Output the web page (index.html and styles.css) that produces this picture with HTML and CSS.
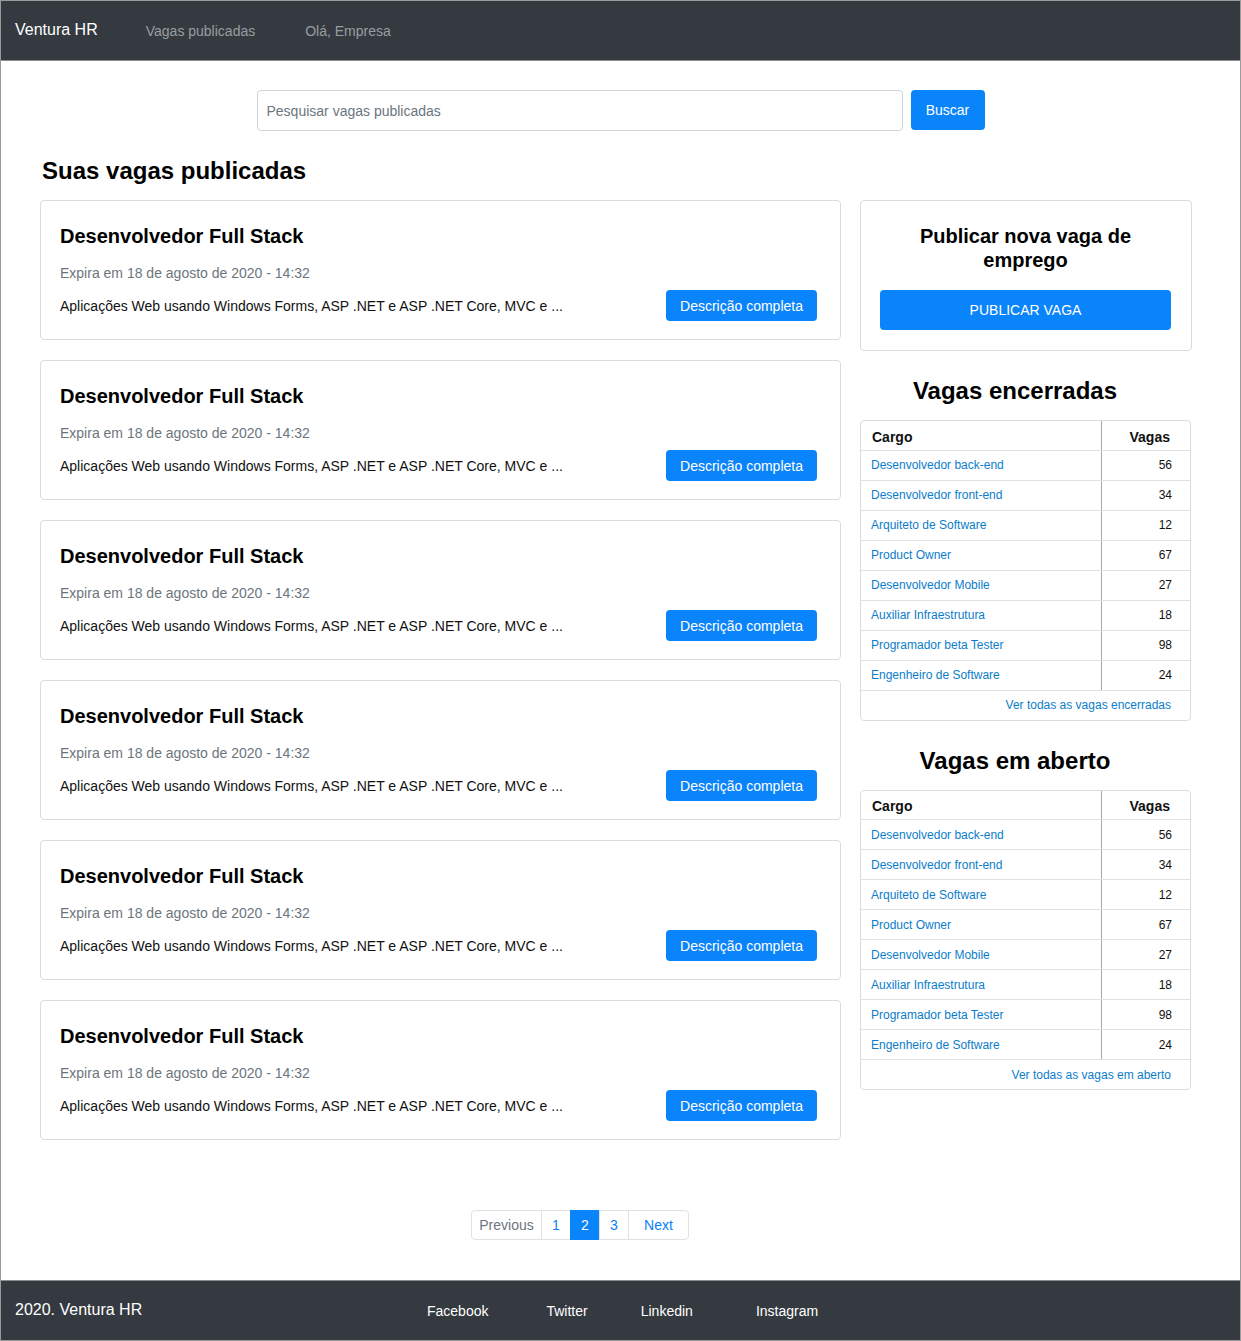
FILE: index.html
```html
<!DOCTYPE html>
<html lang="pt-BR">
<head>
<meta charset="utf-8">
<title>Ventura HR</title>
<link rel="stylesheet" href="styles.css">
</head>
<body>
<div class="page">
  <nav class="navbar">
    <span class="brand">Ventura HR</span>
    <a class="nav-link" href="#">Vagas publicadas</a>
    <a class="nav-link" href="#">Olá, Empresa</a>
  </nav>

  <main class="main">
    <form class="search">
      <input class="search-input" type="text" placeholder="Pesquisar vagas publicadas">
      <button class="btn btn-search" type="button">Buscar</button>
    </form>

    <h2 class="page-title">Suas vagas publicadas</h2>

    <div class="content">
      <section class="jobs">
        <article class="card job">
          <h3 class="job-title">Desenvolvedor Full Stack</h3>
          <p class="job-date">Expira em 18 de agosto de 2020 - 14:32</p>
          <div class="job-row">
            <p class="job-desc">Aplicações Web usando Windows Forms, ASP .NET e ASP .NET Core, MVC e ...</p>
            <a class="btn btn-desc" href="#">Descrição completa</a>
          </div>
        </article>
        <article class="card job">
          <h3 class="job-title">Desenvolvedor Full Stack</h3>
          <p class="job-date">Expira em 18 de agosto de 2020 - 14:32</p>
          <div class="job-row">
            <p class="job-desc">Aplicações Web usando Windows Forms, ASP .NET e ASP .NET Core, MVC e ...</p>
            <a class="btn btn-desc" href="#">Descrição completa</a>
          </div>
        </article>
        <article class="card job">
          <h3 class="job-title">Desenvolvedor Full Stack</h3>
          <p class="job-date">Expira em 18 de agosto de 2020 - 14:32</p>
          <div class="job-row">
            <p class="job-desc">Aplicações Web usando Windows Forms, ASP .NET e ASP .NET Core, MVC e ...</p>
            <a class="btn btn-desc" href="#">Descrição completa</a>
          </div>
        </article>
        <article class="card job">
          <h3 class="job-title">Desenvolvedor Full Stack</h3>
          <p class="job-date">Expira em 18 de agosto de 2020 - 14:32</p>
          <div class="job-row">
            <p class="job-desc">Aplicações Web usando Windows Forms, ASP .NET e ASP .NET Core, MVC e ...</p>
            <a class="btn btn-desc" href="#">Descrição completa</a>
          </div>
        </article>
        <article class="card job">
          <h3 class="job-title">Desenvolvedor Full Stack</h3>
          <p class="job-date">Expira em 18 de agosto de 2020 - 14:32</p>
          <div class="job-row">
            <p class="job-desc">Aplicações Web usando Windows Forms, ASP .NET e ASP .NET Core, MVC e ...</p>
            <a class="btn btn-desc" href="#">Descrição completa</a>
          </div>
        </article>
        <article class="card job">
          <h3 class="job-title">Desenvolvedor Full Stack</h3>
          <p class="job-date">Expira em 18 de agosto de 2020 - 14:32</p>
          <div class="job-row">
            <p class="job-desc">Aplicações Web usando Windows Forms, ASP .NET e ASP .NET Core, MVC e ...</p>
            <a class="btn btn-desc" href="#">Descrição completa</a>
          </div>
        </article>
      </section>

      <aside class="side">
        <div class="card publish">
          <h3 class="publish-title">Publicar nova vaga de emprego</h3>
          <a class="btn btn-publish" href="#">PUBLICAR VAGA</a>
        </div>

        <h2 class="side-title">Vagas encerradas</h2>
        <div class="card table-card">
          <table class="vagas">
            <thead><tr><th class="c-cargo">Cargo</th><th class="c-num">Vagas</th></tr></thead>
            <tbody>
              <tr><td class="c-cargo"><a href="#">Desenvolvedor back-end</a></td><td class="c-num">56</td></tr>
              <tr><td class="c-cargo"><a href="#">Desenvolvedor front-end</a></td><td class="c-num">34</td></tr>
              <tr><td class="c-cargo"><a href="#">Arquiteto de Software</a></td><td class="c-num">12</td></tr>
              <tr><td class="c-cargo"><a href="#">Product Owner</a></td><td class="c-num">67</td></tr>
              <tr><td class="c-cargo"><a href="#">Desenvolvedor Mobile</a></td><td class="c-num">27</td></tr>
              <tr><td class="c-cargo"><a href="#">Auxiliar Infraestrutura</a></td><td class="c-num">18</td></tr>
              <tr><td class="c-cargo"><a href="#">Programador beta Tester</a></td><td class="c-num">98</td></tr>
              <tr><td class="c-cargo"><a href="#">Engenheiro de Software</a></td><td class="c-num">24</td></tr>
            </tbody>
          </table>
          <div class="table-foot"><a href="#">Ver todas as vagas encerradas</a></div>
        </div>

        <h2 class="side-title">Vagas em aberto</h2>
        <div class="card table-card">
          <table class="vagas">
            <thead><tr><th class="c-cargo">Cargo</th><th class="c-num">Vagas</th></tr></thead>
            <tbody>
              <tr><td class="c-cargo"><a href="#">Desenvolvedor back-end</a></td><td class="c-num">56</td></tr>
              <tr><td class="c-cargo"><a href="#">Desenvolvedor front-end</a></td><td class="c-num">34</td></tr>
              <tr><td class="c-cargo"><a href="#">Arquiteto de Software</a></td><td class="c-num">12</td></tr>
              <tr><td class="c-cargo"><a href="#">Product Owner</a></td><td class="c-num">67</td></tr>
              <tr><td class="c-cargo"><a href="#">Desenvolvedor Mobile</a></td><td class="c-num">27</td></tr>
              <tr><td class="c-cargo"><a href="#">Auxiliar Infraestrutura</a></td><td class="c-num">18</td></tr>
              <tr><td class="c-cargo"><a href="#">Programador beta Tester</a></td><td class="c-num">98</td></tr>
              <tr><td class="c-cargo"><a href="#">Engenheiro de Software</a></td><td class="c-num">24</td></tr>
            </tbody>
          </table>
          <div class="table-foot"><a href="#">Ver todas as vagas em aberto</a></div>
        </div>
      </aside>
    </div>

    <nav class="pagination">
      <a class="page-item muted" href="#">Previous</a>
      <a class="page-item" href="#">1</a>
      <a class="page-item active" href="#">2</a>
      <a class="page-item" href="#">3</a>
      <a class="page-item next" href="#">Next</a>
    </nav>
  </main>

  <footer class="footer">
    <span class="footer-brand">2020. Ventura HR</span>
    <div class="footer-links">
      <a href="#">Facebook</a>
      <a href="#">Twitter</a>
      <a href="#">Linkedin</a>
      <a href="#">Instagram</a>
    </div>
  </footer>
</div>
</body>
</html>
```

FILE: styles.css
```css
* { box-sizing: border-box; }

html, body {
  margin: 0;
  padding: 0;
  background: #fff;
}

body {
  font-family: "Liberation Sans", Arial, sans-serif;
  color: #111;
  font-size: 14px;
}

a { text-decoration: none; }

.page {
  border: 1px solid #9b9b9b;
  min-height: 1341px;
  display: flex;
  flex-direction: column;
}

/* navbar */
.navbar {
  height: 60px;
  background: #343a40;
  border-bottom: 1px solid #8c8c8c;
  display: flex;
  align-items: center;
  padding-left: 14px;
}

.brand {
  color: #fff;
  font-size: 16px;
  margin-top: -2px;
  margin-right: 48px;
}

.nav-link {
  color: #9a9da1;
  font-size: 14px;
  margin-right: 50px;
}

/* main */
.main {
  flex: 1;
  padding: 29px 48px 0 39px;
}

.search {
  display: flex;
  justify-content: center;
  gap: 8px;
  padding-left: 9px;
}

.search-input {
  width: 646px;
  height: 41px;
  border: 1px solid #ced4da;
  border-radius: 4px;
  padding: 0 9px;
  font-family: "Liberation Sans", Arial, sans-serif;
  font-size: 14px;
  color: #495057;
}

.search-input::placeholder { color: #6c757d; }

.btn {
  display: inline-flex;
  align-items: center;
  justify-content: center;
  background: #0a84fb;
  color: #fff;
  border: none;
  border-radius: 4px;
  font-family: "Liberation Sans", Arial, sans-serif;
}

.btn-search {
  width: 74px;
  height: 40px;
  font-size: 14px;
}

.page-title {
  font-size: 24px;
  line-height: 29px;
  font-weight: bold;
  margin: 25px 0 15px 2px;
  color: #000;
}

.content {
  display: flex;
  align-items: flex-start;
  gap: 19px;
}

.jobs {
  width: 801px;
  flex-shrink: 0;
  display: flex;
  flex-direction: column;
  gap: 20px;
}

.card {
  border: 1px solid #dcdcdc;
  border-radius: 4px;
  background: #fff;
}

.job {
  padding: 23px 23px 18px 19px;
}

.job-title {
  margin: 0 0 15px;
  font-size: 20px;
  line-height: 24px;
  font-weight: bold;
  color: #000;
}

.job-date {
  margin: 0 0 6px;
  line-height: 21px;
  font-size: 14px;
  color: #6c757d;
}

.job-row {
  display: flex;
  justify-content: space-between;
  align-items: center;
  height: 31px;
}

.job-desc {
  margin: 0;
  font-size: 14px;
  color: #111;
}

.btn-desc {
  width: 151px;
  height: 31px;
  font-size: 14px;
}

/* side */
.side {
  width: 332px;
  flex-shrink: 0;
}

.publish {
  padding: 23px 20px 20px 19px;
  text-align: center;
}

.publish-title {
  margin: 0 0 18px;
  font-size: 20px;
  line-height: 24px;
  font-weight: bold;
  color: #000;
  padding: 0 18px;
}

.btn-publish {
  width: 291px;
  height: 40px;
  font-size: 14px;
}

.side-title {
  text-align: center;
  font-size: 24px;
  line-height: 32px;
  font-weight: bold;
  color: #000;
  margin: 24px 22px 13px 0;
}

.table-card {
  width: 331px;
  overflow: hidden;
}

.vagas {
  width: 100%;
  border-collapse: collapse;
}

.vagas th, .vagas td {
  height: 30px;
  padding: 0;
  border-bottom: 1px solid #dee2e6;
}

.vagas tr > :first-child { border-right: 1px solid #a8a8a8; }

.vagas th {
  font-size: 14px;
  font-weight: bold;
  color: #111;
  height: 29px;
  padding-top: 3px;
}

.vagas td {
  font-size: 12px;
  color: #111;
}

.vagas .c-cargo {
  text-align: left;
  padding-left: 10px;
  width: 240px;
}

.vagas th.c-cargo { padding-left: 11px; }

.vagas .c-num {
  text-align: right;
  padding-right: 20px;
}

.vagas td.c-num { padding-right: 18px; }

.vagas a { color: #0b7dcb; }

.table-foot {
  height: 29px;
  display: flex;
  align-items: center;
  justify-content: flex-end;
  padding-right: 19px;
  font-size: 12px;
}

.table-foot a { color: #0b7dcb; }

/* pagination */
.pagination {
  display: flex;
  justify-content: center;
  margin: 70px 0 40px;
  padding-right: 72px;
}

.page-item {
  height: 30px;
  min-width: 30px;
  padding: 0 9px;
  display: flex;
  align-items: center;
  justify-content: center;
  font-size: 14px;
  color: #0a7ff5;
  border: 1px solid #dee2e6;
  margin-left: -1px;
}

.page-item:first-child {
  border-radius: 4px 0 0 4px;
  margin-left: 0;
  width: 71px;
}

.page-item.muted { color: #6c757d; }

.page-item.active {
  background: #0a84fb;
  border-color: #0a84fb;
  color: #fff;
}

.page-item.next {
  width: 61px;
  border-radius: 0 4px 4px 0;
}

/* footer */
.footer {
  height: 60px;
  background: #343a40;
  border-top: 1px solid #8c8c8c;
  display: flex;
  align-items: center;
  color: #fff;
  padding-left: 14px;
}

.footer-brand {
  font-size: 16px;
  width: 412px;
  margin-top: -2px;
}

.footer-links {
  display: flex;
  font-size: 14px;
  margin-top: 1px;
}

.footer-links a {
  color: #fff;
}

.footer-links a:nth-child(1) { margin-right: 58px; }
.footer-links a:nth-child(2) { margin-right: 53px; }
.footer-links a:nth-child(3) { margin-right: 63px; }
```
